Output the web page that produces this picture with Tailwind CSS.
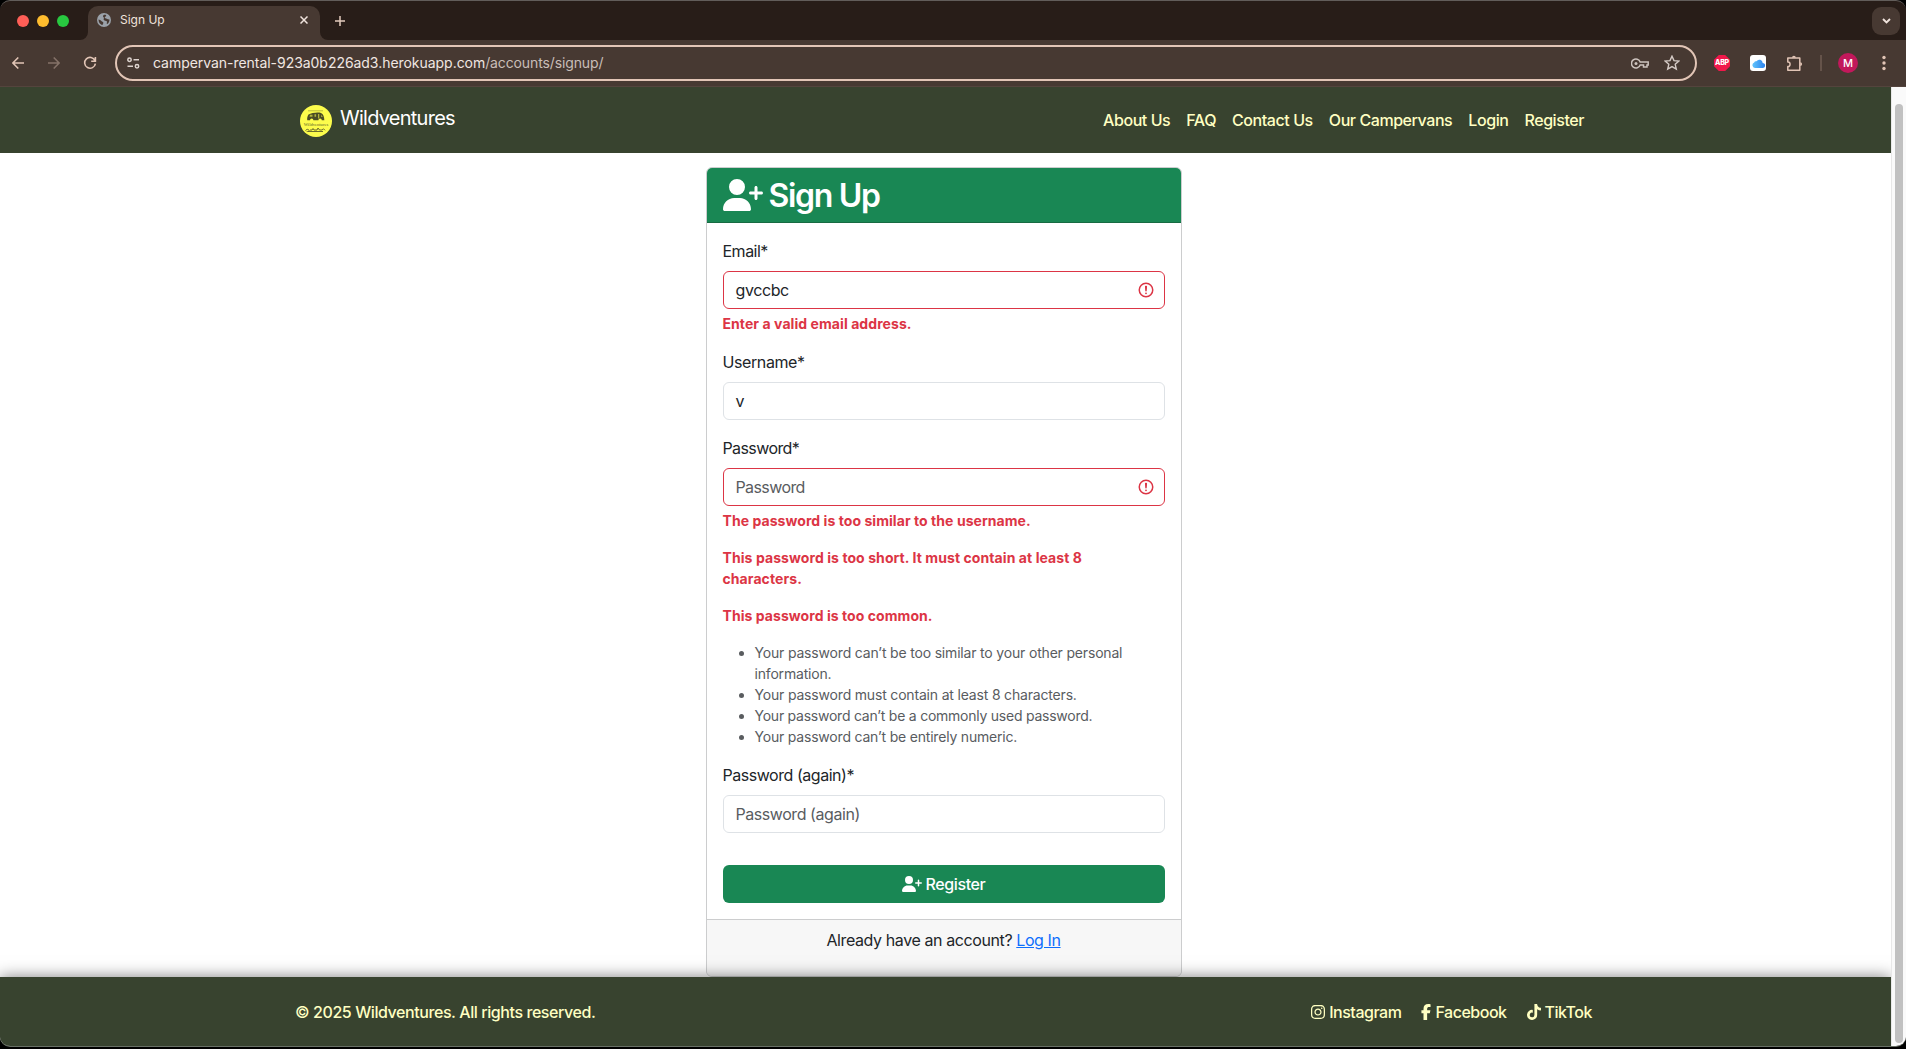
<!DOCTYPE html>
<html lang="en">
<head>
<meta charset="utf-8">
<title>Sign Up</title>
<script src="https://cdn.jsdelivr.net/npm/@tailwindcss/browser@4"></script>
</head>
<body class="bg-black font-[Inter,sans-serif] text-[#212529]">
<svg class="hidden">
  <symbol id="user-plus" viewBox="0 0 640 512"><path d="M96 128a128 128 0 1 1 256 0A128 128 0 1 1 96 128zM0 482.3C0 383.8 79.8 304 178.3 304l91.4 0C368.2 304 448 383.8 448 482.3c0 16.4-13.3 29.7-29.7 29.7L29.7 512C13.3 512 0 498.7 0 482.3zM504 312l0-64-64 0c-13.3 0-24-10.7-24-24s10.7-24 24-24l64 0 0-64c0-13.3 10.7-24 24-24s24 10.7 24 24l0 64 64 0c13.3 0 24 10.7 24 24s-10.7 24-24 24l-64 0 0 64c0 13.3-10.7 24-24 24s-24-10.7-24-24z"/></symbol>
  <symbol id="invalid" viewBox="0 0 12 12"><circle cx="6" cy="6" r="4.5" fill="none" stroke="#dc3545"/><path stroke="#dc3545" stroke-linejoin="round" d="M5.8 3.6h.4L6 6.5z"/><circle cx="6" cy="8.2" r=".6" fill="#dc3545"/></symbol>
</svg>
<div class="flex h-[1047px] flex-col overflow-hidden rounded-b-[10px] border-b border-[#687065]">

  <!-- Tab strip -->
  <div class="flex h-10 shrink-0 items-center rounded-t-[10px] border-t border-[#625d5a] bg-[#281d18]">
    <div class="flex w-20 gap-2 pl-[17px]">
      <span class="size-3 rounded-full bg-[#ff5f57]"></span>
      <span class="size-3 rounded-full bg-[#febc2e]"></span>
      <span class="size-3 rounded-full bg-[#28c840]"></span>
    </div>
    <div class="flex h-full w-2 items-end"><svg class="size-2 fill-[#473932]" viewBox="0 0 8 8"><path d="M8 0v8H0a8 8 0 0 0 8-8z"/></svg></div>
    <div class="flex h-[34px] w-[232px] items-center self-end rounded-t-[10px] bg-[#473932] pb-1.5">
      <svg class="ml-[9px] size-[14px]" viewBox="0 0 14 14"><circle cx="7" cy="7" r="7" fill="#9aa1a9"/><path d="M7.200 1.800c1.200-.3 2 .2 2.100 1-.1.900-1.500.8-1.600 1.700 0 .8 1.400.8 2.100 1.200.9.500 1.500.9 2.700.8-.1 2-.9 3.500-2.100 4.600-.8-.2-.9-1-.5-1.600.4-.8 0-1.400-.8-1.600-1.100-.2-2.300-.3-2.500-1.300-.1-.9.700-1.300.2-2-.4-.6-1-.9-.8-1.600.1-.6.600-1 1.200-1.200z" fill="#473932"/><path d="M1.500 6.600c1.200.1 2.200.6 2.900 1.400.6.700 1.900.8 2 1.800 0 .8-.6 1-.7 1.700-.1.400-.4.600-.8.500C2.900 11.200 1.500 9.200 1.500 6.600z" fill="#473932"/></svg>
      <span class="ml-[9px] text-xs text-[#f1e4dd]">Sign Up</span>
      <svg class="mr-3 ml-auto size-2 stroke-[#f1e4dd]" viewBox="0 0 8 8" stroke-width="1.5"><path d="M.5.5l7 7M7.500.5l-7 7"/></svg>
    </div>
    <div class="flex h-full w-2 items-end"><svg class="size-2 fill-[#473932]" viewBox="0 0 8 8"><path d="M0 0v8h8a8 8 0 0 1-8-8z"/></svg></div>
    <svg class="ml-[7px] size-[10px] stroke-[#e2cabc]" viewBox="0 0 10 10" stroke-width="1.5"><path d="M5 0v10M0 5h10"/></svg>
    <div class="mr-1.5 ml-auto flex size-7 items-center justify-center rounded-[9px] bg-[#473932]">
      <svg class="h-[6px] w-[9px] fill-none stroke-[#f1e4dd]" viewBox="0 0 9 6" stroke-width="1.900"><path d="M1 1l3.500 3.500L8 1"/></svg>
    </div>
  </div>

  <!-- Toolbar -->
  <div class="flex h-[47px] shrink-0 items-center border-b border-[#54443d] bg-[#473932] pl-3">
    <svg class="size-3 fill-none stroke-[#e2c5b6]" viewBox="0 0 12 12" stroke-width="1.500"><path d="M12 6H1M6.300.5L.9 6l5.400 5.500"/></svg>
    <svg class="ml-6 size-3 fill-none stroke-[#857268]" viewBox="0 0 12 12" stroke-width="1.500"><path d="M0 6h11M5.700.5L11.100 6l-5.400 5.500"/></svg>
    <svg class="ml-[23px] size-[14px] fill-none stroke-[#e2c5b6]" viewBox="0 0 14 14" stroke-width="1.600"><path d="M12 4.600A5.400 5.400 0 1 0 12.400 7.600M12.400 1v4.200H8.200"/></svg>
    <div class="ml-[18px] flex h-9 w-[1582px] items-center rounded-full border-2 border-[#e2c5b6] pr-[15px] pl-[10px]">
      <svg class="h-3 w-[13px] fill-none stroke-[#ddd3ce]" viewBox="0 0 13 12" stroke-width="1.500"><circle cx="2.500" cy="2.700" r="1.700"/><path d="M6.500 2.700H12M.5 9.300h5.500"/><circle cx="10" cy="9.300" r="1.700"/></svg>
      <span class="ml-[13px] text-sm tracking-[-0.04px] text-[#f1e7e2]">campervan-rental-923a0b226ad3.herokuapp.com<span class="tracking-[-0.12px] text-[#c9beb8]">/accounts/signup/</span></span>
      <svg class="ml-auto h-[11px] w-[18px] fill-none stroke-[#cdc3be]" viewBox="0 0 18 11" stroke-width="1.500"><path d="M9.200 4A4.500 4.500 0 1 0 9.200 7h3.300v2h3.500V7h1.200V4z"/><circle cx="5" cy="5.500" r="1.500" fill="#cdc3be" stroke="none"/></svg>
      <svg class="ml-[15px] size-[16px] fill-none stroke-[#d5cbc6]" viewBox="0 0 16 16" stroke-width="1.400"><path d="M8 1.200l2 4.400 4.900.5-3.700 3.200 1.100 4.800L8 11.600l-4.300 2.500 1.100-4.800-3.700-3.200 4.900-.5z"/></svg>
    </div>
    <div class="ml-[17px] flex size-4 items-center justify-center bg-[#f0184a] text-[7px] font-extrabold tracking-[-0.2px] text-white [clip-path:polygon(30%_0,70%_0,100%_30%,100%_70%,70%_100%,30%_100%,0_70%,0_30%)]">ABP</div>
    <div class="ml-5 flex size-4 items-center justify-center rounded-[3px] bg-white">
      <svg class="h-[9px] w-[13px]" viewBox="0 0 13 9"><defs><linearGradient id="cloud"><stop stop-color="#62c4fb"/><stop offset="1" stop-color="#2a82f0"/></linearGradient></defs><path fill="url(#cloud)" d="M3 9a2.800 2.800 0 0 1-.8-5.400 2 2 0 0 1 2.300-1.400A3.400 3.400 0 0 1 10.700 4 2.500 2.500 0 0 1 10.500 9z"/></svg>
    </div>
    <svg class="ml-[20px] size-[17px] fill-none stroke-[#e2c5b6]" viewBox="0 0 17 17" stroke-width="1.500" stroke-linejoin="round"><path d="M1.800 3h12v12.300H1.800v-3.700c3 .2 3-4.900 0-4.700z"/><path d="M6 2.700a1.900 1.900 0 0 1 3.800 0zM14.200 7.200a1.900 1.900 0 0 1 0 3.800z" fill="#e2c5b6" stroke="none"/></svg>
    <span class="ml-[17px] h-4 w-0.5 bg-[#65534a]"></span>
    <span class="ml-4 flex size-5 items-center justify-center rounded-full bg-[#c2185b] text-[11px] font-medium text-white">M</span>
    <svg class="ml-[24px] h-[16px] w-[4px] fill-[#e2c5b6]" viewBox="0 0 4 16"><circle cx="2" cy="2.500" r="1.700"/><circle cx="2" cy="8" r="1.700"/><circle cx="2" cy="13.500" r="1.700"/></svg>
  </div>

  <!-- Page -->
  <div class="flex min-h-0 flex-1">
    <div class="flex w-[1891px] flex-col bg-white tracking-[-0.4px]">
      <nav class="flex h-[66px] shrink-0 items-center bg-[#38432f] pr-[307px] pl-[300px]">
        <svg class="mt-px size-8" viewBox="0 0 32 32">
          <circle cx="16" cy="16" r="16" fill="#fcfc4c"/>
          <path d="M8 5.800h15" stroke="#8f9034" stroke-width=".6"/>
          <path fill="#4b4c25" d="M8.500 9.500c3-2 10-2.600 12.500-1.600 2.200 1 3.400 4 3.300 7.400h-2.500a1.700 1.700 0 0 0-3.400 0h-5a1.700 1.700 0 0 0-3.400 0H7.300c-.5-2 .2-4.300 1.200-5.800z"/>
          <path fill="#b3b33c" d="M10 9.800h2.500v2H9.500zM14.500 9.300h1.600v2.500h-1.600zM18 9h1.300v4.500H18zM21.200 9.500l1.500 2.500h-1.500z"/>
          <text x="16" y="20.800" font-size="4.600" font-family="Liberation Serif" text-anchor="middle" fill="#5b5c28" letter-spacing="0">Wildventures</text>
          <path fill="none" stroke="#5b5c28" stroke-width=".9" d="M5.500 25.500c1-1.500 3-1.500 3.500-.3s-2 1.800-2.500.8M10 25h2l1-1.500 1 1.500h3l1-2 1.500 2H22l1.500-1.200 1.500 1.500M8 26.500h15"/>
        </svg>
        <span class="-mt-1 ml-2 text-xl tracking-[-0.75px] text-white">Wildventures</span>
        <div class="ml-auto flex gap-4 text-base font-[450] tracking-[-0.43px] text-[#ffffc2]">
          <a>About Us</a><a>FAQ</a><a>Contact Us</a><a>Our Campervans</a><a>Login</a><a>Register</a>
        </div>
      </nav>

      <main class="flex min-h-0 flex-1 flex-col items-center pt-[14px]">
        <div class="-ml-[4px] w-[476px] shrink-0 overflow-hidden rounded-md border border-[#cccdce]">
          <div class="flex h-[55px] items-center gap-[6px] border-b border-[#176b42] bg-[#198754] px-4">
            <svg class="h-8 w-10 fill-white"><use href="#user-plus"/></svg>
            <h2 class="mt-0.5 text-[32px] leading-[38px] font-semibold tracking-[-1.300px] text-white">Sign Up</h2>
          </div>
          <div class="px-[16px] pt-4 pb-4">
            <label class="mb-2 block leading-6 tracking-[-0.500px]">Email*</label>
            <div class="flex h-[38px] items-center justify-between rounded-md border border-[#dc3545] pr-[9px] pl-3 tracking-[-0.4px]">gvccbc<svg class="size-[18px]"><use href="#invalid"/></svg></div>
            <p class="mt-1 mb-4 text-sm leading-[21px] font-bold tracking-[0.07px] text-[#dc3545]">Enter a valid email address.</p>
            <label class="mb-2 block leading-6">Username*</label>
            <div class="mb-4 flex h-[38px] items-center rounded-md border border-[#dee2e6] px-3">v</div>
            <label class="mb-2 block leading-6 tracking-[-0.6px]">Password*</label>
            <div class="flex h-[38px] items-center justify-between rounded-md border border-[#dc3545] pr-[9px] pl-3 tracking-[-0.6px] text-[#595c5f]">Password<svg class="size-[18px]"><use href="#invalid"/></svg></div>
            <div class="mt-1 mb-4 flex flex-col gap-4 text-sm leading-[21px] font-bold tracking-[0.06px] text-[#dc3545]">
              <p>The password is too similar to the username.</p>
              <p class="tracking-[0.08px]">This password is too short. It must contain at least 8<br>characters.</p>
              <p>This password is too common.</p>
            </div>
            <ul class="mb-4 list-disc pl-8 text-sm leading-[21px] tracking-[-0.2px] text-[#595c5f]">
              <li class="tracking-[-0.18px]">Your password can’t be too similar to your other personal<br>information.</li>
              <li class="tracking-[-0.18px]">Your password must contain at least 8 characters.</li>
              <li class="tracking-[-0.24px]">Your password can’t be a commonly used password.</li>
              <li>Your password can’t be entirely numeric.</li>
            </ul>
            <label class="mb-2 block leading-6 tracking-[-0.46px]">Password (again)*</label>
            <div class="flex h-[38px] items-center rounded-md border border-[#dee2e6] px-3 tracking-[-0.44px] text-[#595c5f]">Password (again)</div>
            <div class="mt-8 flex h-[38px] items-center justify-center gap-1 rounded-md bg-[#198754] font-[450] tracking-[-0.4px] text-white"><svg class="h-4 w-5 fill-white"><use href="#user-plus"/></svg>Register</div>
          </div>
          <div class="h-[57px] border-t border-[#cccdce] bg-[#f7f7f7] pt-2 text-center leading-6">Already have an account? <a class="text-[#0d6efd] underline">Log In</a></div>
        </div>
      </main>

      <footer class="relative flex h-[69px] shrink-0 items-center bg-[#38432f] pr-[299px] pl-[295px] font-[450] tracking-[-0.42px] text-[#ffffc2] shadow-[0_0_15px_rgba(0,0,0,0.5)]">
        <span>© 2025 Wildventures. All rights reserved.</span>
        <div class="ml-auto flex gap-5 tracking-[-0.48px]">
          <a class="flex items-center gap-1"><svg class="h-4 w-[14px] fill-current" viewBox="0 0 448 512"><path d="M224.100 141c-63.600 0-114.900 51.300-114.900 114.900s51.300 114.900 114.900 114.900S339 319.500 339 255.900 287.700 141 224.100 141zm0 189.600c-41.100 0-74.700-33.500-74.700-74.700s33.500-74.700 74.700-74.700 74.700 33.500 74.700 74.700-33.600 74.700-74.700 74.700zm146.400-194.300c0 14.900-12 26.800-26.800 26.800-14.900 0-26.800-12-26.800-26.800s12-26.800 26.800-26.800 26.800 12 26.800 26.800zm76.100 27.200c-1.700-35.900-9.900-67.700-36.200-93.900-26.200-26.200-58-34.400-93.900-36.200-37-2.100-147.900-2.100-184.900 0-35.800 1.700-67.600 9.900-93.900 36.100s-34.400 58-36.200 93.900c-2.100 37-2.100 147.900 0 184.900 1.700 35.900 9.900 67.700 36.200 93.900s58 34.400 93.900 36.200c37 2.100 147.900 2.100 184.900 0 35.900-1.700 67.700-9.900 93.900-36.200 26.200-26.200 34.400-58 36.200-93.900 2.100-37 2.100-147.800 0-184.800zM398.800 388c-7.800 19.600-22.900 34.700-42.600 42.600-29.500 11.700-99.500 9-132.100 9s-102.700 2.600-132.100-9c-19.600-7.800-34.700-22.900-42.600-42.600-11.700-29.500-9-99.500-9-132.100s-2.600-102.700 9-132.100c7.800-19.600 22.900-34.700 42.600-42.600 29.500-11.700 99.500-9 132.100-9s102.700-2.600 132.100 9c19.600 7.800 34.700 22.900 42.600 42.600 11.700 29.500 9 99.500 9 132.100s2.700 102.700-9 132.100z"/></svg>Instagram</a>
          <a class="flex items-center gap-1"><svg class="h-4 w-[10px] fill-current" viewBox="0 0 320 512"><path d="M80 299.300V512H196V299.300h86.500l18-97.800H196V166.900c0-51.700 20.300-71.500 72.700-71.500c16.300 0 29.400 .4 37 1.200V7.900C291.400 4 256.400 0 236.200 0C129.300 0 80 50.500 80 159.400v42.100H14v97.800H80z"/></svg>Facebook</a>
          <a class="flex items-center gap-1"><svg class="h-4 w-[14px] fill-current" viewBox="0 0 448 512"><path d="M448,209.910a210.060,210.060,0,0,1-122.770-39.250V349.380A162.550,162.550,0,1,1,185,188.310V278.200a74.620,74.620,0,1,0,52.230,71.180V0l88,0a121.180,121.180,0,0,0,1.860,22.170h0A122.180,122.180,0,0,0,381,102.390a121.430,121.430,0,0,0,67,20.140Z"/></svg>TikTok</a>
        </div>
      </footer>
    </div>
    <div class="relative z-10 flex-1 border-l border-[#e8e8e8] bg-[#fafafa] pt-[17px] pl-[3px]"><div class="h-[939px] w-2 rounded-full bg-[#c1c1c1]"></div></div>
  </div>
</div>
</body>
</html>
